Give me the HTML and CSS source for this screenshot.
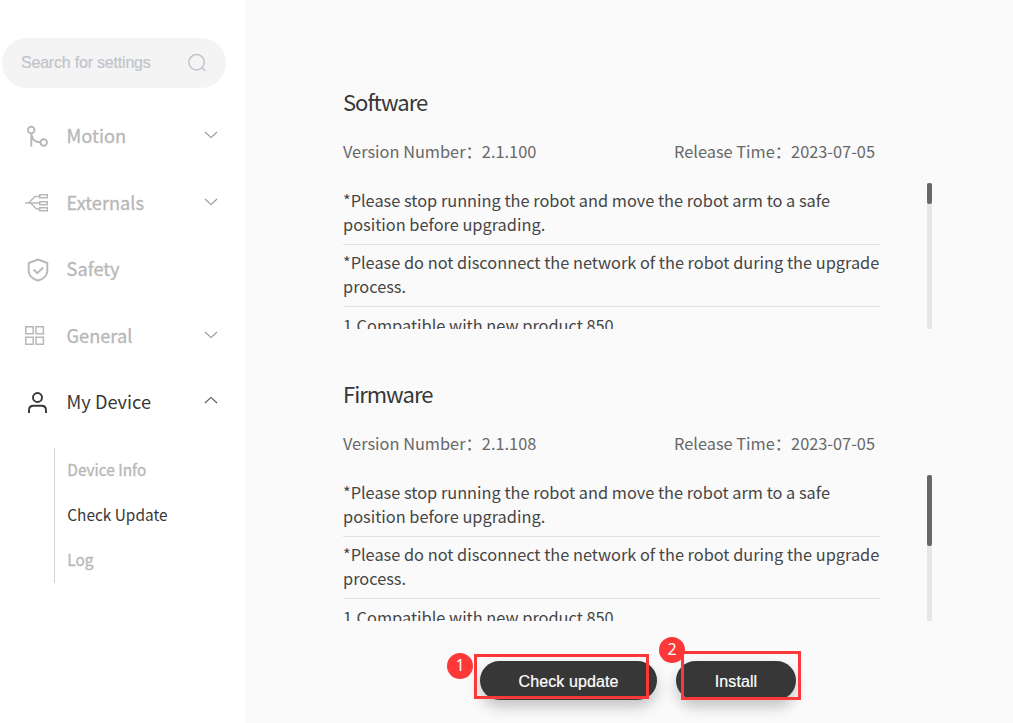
FILE: index.html
```html
<!DOCTYPE html>
<html lang="en">
<head>
<meta charset="utf-8">
<title>Check Update</title>
<link rel="stylesheet" href="styles.css">
</head>
<body>
<div class="app">
  <aside class="sidebar">
    <div class="search">
      <span class="search-text">Search for settings</span>
      <svg class="search-icon" width="20" height="20" viewBox="0 0 20 20"><circle cx="9.6" cy="9.3" r="7.7"/><path d="M14.500 14.200l3.700 3.600"/></svg>
    </div>
    <nav class="nav">
      <div class="nav-item">
        <svg class="icon" width="26" height="26" viewBox="0 0 26 26"><circle cx="6.2" cy="7.100" r="3.3"/><circle cx="18.7" cy="19.500" r="3.3"/><path d="M6.3 10.500v13M6.5 12c.8 4.3 3.500 7.200 8.800 7.300"/></svg>
        <span class="label">Motion</span>
        <svg class="chevron" width="14" height="8" viewBox="0 0 14 8"><path d="M1 1l6 5.600 6-5.600"/></svg>
      </div>
      <div class="nav-item">
        <svg class="icon thin" width="26" height="26" viewBox="0 0 26 26"><path d="M0 13h14M3.500 13L10 6.500h4M5.500 13l6 6h2.500"/><path d="M14.700 4.700h7.600v3h-7.600zM14.700 11.700h7.600v3h-7.600zM14.700 17.700h7.600v3h-7.600z"/></svg>
        <span class="label">Externals</span>
        <svg class="chevron" width="14" height="8" viewBox="0 0 14 8"><path d="M1 1l6 5.600 6-5.600"/></svg>
      </div>
      <div class="nav-item">
        <svg class="icon" width="26" height="26" viewBox="0 0 26 26"><path d="M13 3.500l9.300 3.500v8c0 5-4 8-9.300 9.500-5.300-1.500-9.300-4.500-9.300-9.500v-8z"/><path d="M8.500 13.500l3.700 3.700 6-5.700"/></svg>
        <span class="label">Safety</span>
      </div>
      <div class="nav-item">
        <svg class="icon thin" width="26" height="26" viewBox="0 0 26 26"><path d="M.8 3.800h7.400v7H.8zM11 3.800h7.400v7H11zM.8 14.200h7.400v7H.8zM11 14.200h7.400v7H11z"/></svg>
        <span class="label">General</span>
        <svg class="chevron" width="14" height="8" viewBox="0 0 14 8"><path d="M1 1l6 5.600 6-5.600"/></svg>
      </div>
      <div class="nav-item active">
        <svg class="icon" width="26" height="26" viewBox="0 0 26 26"><circle cx="12.500" cy="8.500" r="4.500"/><path d="M4 24v-2.800c0-3 1.700-4.500 4.500-4.500h8c2.800 0 4.500 1.500 4.500 4.500v2.800"/></svg>
        <span class="label">My Device</span>
        <svg class="chevron" width="14" height="8" viewBox="0 0 14 8"><path d="M1 7l6-5.600 6 5.600"/></svg>
      </div>
    </nav>
    <div class="subnav">
      <span class="sub">Device Info</span>
      <span class="sub current">Check Update</span>
      <span class="sub">Log</span>
    </div>
  </aside>
  <main class="content">
    <section class="package">
      <h2 class="title">Software</h2>
      <div class="meta"><span>Version Number：2.1.100</span><span>Release Time：2023-07-05</span></div>
      <div class="viewport">
        <div class="notes">
          <p class="note">*Please stop running the robot and move the robot arm to a safe position before upgrading.</p>
          <p class="note">*Please do not disconnect the network of the robot during the upgrade process.</p>
          <p class="note">1.Compatible with new product 850</p>
        </div>
        <div class="track"><div class="thumb short"></div></div>
      </div>
    </section>
    <section class="package">
      <h2 class="title">Firmware</h2>
      <div class="meta"><span>Version Number：2.1.108</span><span>Release Time：2023-07-05</span></div>
      <div class="viewport">
        <div class="notes">
          <p class="note">*Please stop running the robot and move the robot arm to a safe position before upgrading.</p>
          <p class="note">*Please do not disconnect the network of the robot during the upgrade process.</p>
          <p class="note">1.Compatible with new product 850</p>
        </div>
        <div class="track"><div class="thumb long"></div></div>
      </div>
    </section>
    <div class="actions">
      <div class="action check"><div class="button">Check update</div><div class="outline"></div><span class="badge">1</span></div>
      <div class="action install"><div class="button">Install</div><div class="outline"></div><span class="badge">2</span></div>
    </div>
  </main>
</div>
</body>
</html>
```
FILE: styles.css
```css
* { box-sizing: border-box; }
body { margin: 0; background: #fff; font-family: "Noto Sans CJK SC", sans-serif; }
.app { display: flex; width: 1013px; height: 723px; overflow: hidden; }
.sidebar { width: 245px; flex: none; padding: 38px 19px 0 2px; }
.search { display: flex; align-items: center; justify-content: space-between; height: 50px; padding: 0 19px; border-radius: 25px; background: #f4f4f4; color: #c0c4cc; font: 16px "Liberation Sans", Arial, sans-serif; }
.search-text { letter-spacing: -0.2px; padding-bottom: 1px; -webkit-text-stroke: 0.2px; }
.search-icon { fill: none; stroke: #c0c4cc; stroke-width: 1.5; }
.nav { padding: 15px 8px 0 23px; }
.nav-item { display: flex; align-items: center; height: 66.5px; color: #b8b8b8; }
.icon { fill: none; stroke: currentColor; stroke-width: 1.9; }
.icon.thin { stroke-width: 1.5; }
.label { flex: 1; margin-left: 15.6px; padding-bottom: 2px; font-size: 18.2px; line-height: 26px; -webkit-text-stroke: 0.35px; }
.chevron { fill: none; stroke: #909399; stroke-width: 1.1; margin-bottom: 2px; }
.nav-item.active { color: #373737; }
.active .label { -webkit-text-stroke: 0; }
.active .chevron { stroke: #555; margin-bottom: 4px; }
.subnav { display: flex; flex-direction: column; margin: 12px 0 0 52px; border-left: 1px solid #d5d5d5; height: 135px; padding-left: 12.3px; }
.sub { height: 45px; line-height: 43px; font-size: 15.4px; color: #b8b8b8; -webkit-text-stroke: 0.35px; }
.sub.current { -webkit-text-stroke: 0; color: #373737; }
.content { flex: 1; padding: 79px 81px 0 98px; background: #fafafa; }
.package { margin-bottom: 42px; }
.title { margin: 0; height: 48px; line-height: 45px; font-size: 22px; letter-spacing: -1px; font-weight: 400; color: #373737; }
.meta { display: flex; justify-content: space-between; height: 50px; line-height: 49px; margin-right: 57px; font-size: 16.35px; color: #686868; }
.viewport { display: flex; justify-content: space-between; height: 146px; margin-top: 6px; overflow: hidden; }
.notes { width: 538px; }
.note { margin: 0; padding: 5px 0 8px; width: 537px; border-bottom: 1px solid #e2e2e2; line-height: 24px; font-size: 16.35px; color: #464646; }
.note:last-child { padding-top: 6px; }
.track { width: 5px; background: #e5e6e8; }
.thumb { border-radius: 2px; background: #686868; }
.short { height: 21px; }
.long { height: 71px; }
.actions { display: flex; gap: 19px; margin: -2px 0 0 137px; font-family: "Liberation Sans", Arial, sans-serif; }
.action { position: relative; height: 39px; }
.check { width: 177px; }
.install { width: 120px; }
.button { height: 39px; border-radius: 20px; background: #373737; color: #fff; text-align: center; font-size: 16px; letter-spacing: 0.1px; line-height: 41px; -webkit-text-stroke: 0.2px; box-shadow: 0 7px 14px rgba(0,0,0,.22); }
.outline { position: absolute; border: 3px solid #fd3838; }
.check .outline { left: -6px; top: -7px; width: 175px; height: 45px; }
.install .outline { left: 5px; top: -10px; width: 120px; height: 49px; }
.badge { position: absolute; width: 26px; height: 26px; border-radius: 50%; background: #fd3838; color: #fff; font: 16px/24px "Noto Sans", sans-serif; text-align: center; }
.check .badge { left: -33px; top: -8px; }
.install .badge { left: -17px; top: -24px; }
```
